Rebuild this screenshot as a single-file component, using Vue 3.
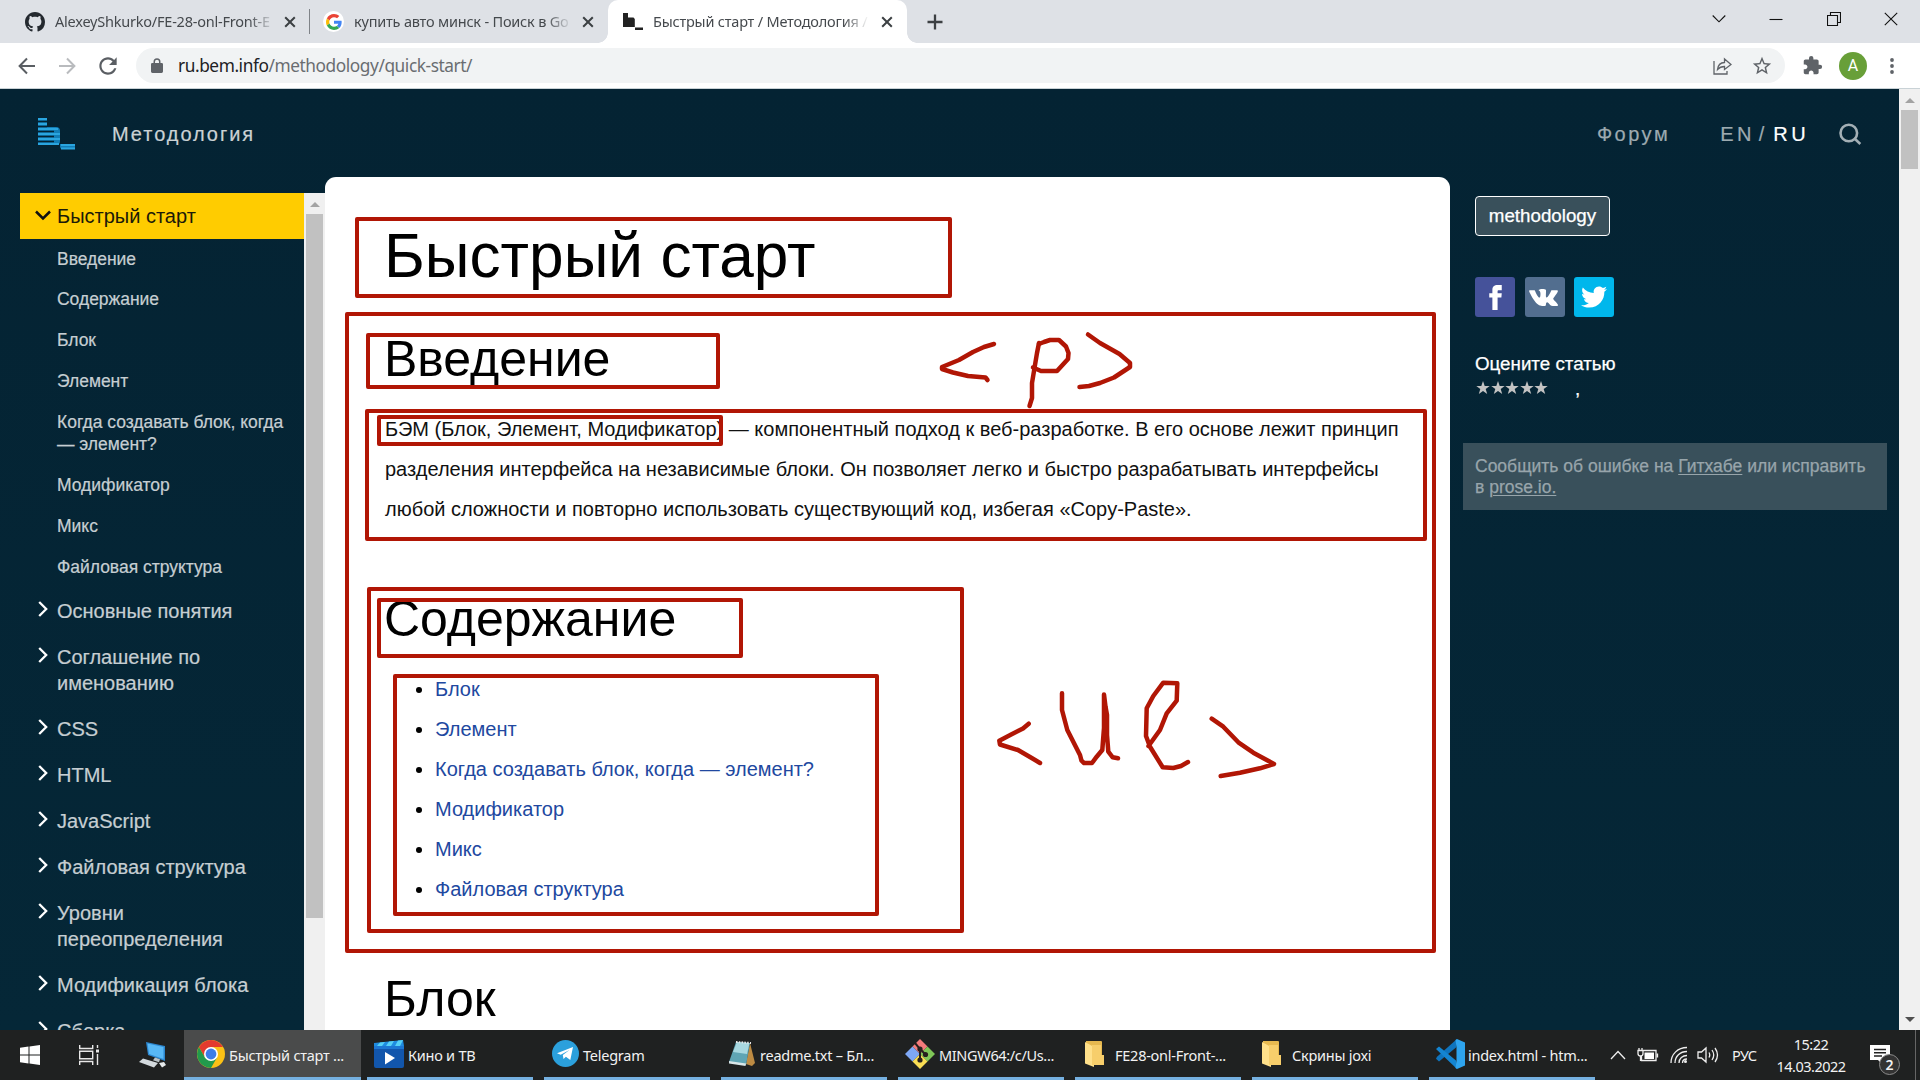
<script setup>
const sections = ['Введение', 'Содержание', 'Блок', 'Элемент', 'Когда создавать блок, когда — элемент?', 'Модификатор', 'Микс', 'Файловая структура']
const topics = ['Основные понятия', 'Соглашение по именованию', 'CSS', 'HTML', 'JavaScript', 'Файловая структура', 'Уровни переопределения', 'Модификация блока', 'Сборка']
const contents = ['Блок', 'Элемент', 'Когда создавать блок, когда — элемент?', 'Модификатор', 'Микс', 'Файловая структура']
const tasks = [
  { id: 'chrome', title: 'Быстрый старт ...' },
  { id: 'movies', title: 'Кино и ТВ' },
  { id: 'telegram', title: 'Telegram' },
  { id: 'notepad', title: 'readme.txt – Бл...' },
  { id: 'git', title: 'MINGW64:/c/Us...' },
  { id: 'folder', title: 'FE28-onl-Front-...' },
  { id: 'folder', title: 'Скрины joxi' },
  { id: 'vscode', title: 'index.html - htm...' },
]
// Frames drawn over the page: x, y, width, height of the stroke centre line
const frames = [
  [357, 219, 593, 77], [347, 314, 1087, 637], [368, 335, 350, 52], [367, 411, 1058, 128],
  [379, 417, 342, 27], [369, 589, 593, 342], [379, 600, 362, 56], [395, 676, 482, 238],
]
const strokes = [
  '994,344 984,347 973,352 959,360 942,367 942,369 953,372.5 968,376 985.5,377.5 987.5,380',
  '1039,343 1037,353 1035,365 1032,383 1032,398 1029.5,406',
  '1039,344 1044,342 1050,340 1059,340 1066,346.5 1068.5,353 1068,359 1057,371 1041,371 1033,367.5',
  '1088,334.5 1100,343 1119.5,354 1130,363 1130,367 1114,377.5 1100,383 1089,386 1079.5,387',
  '1028.7,723.7 1023,728.5 1010.7,734.7 999.3,740.7 1000,744.5 1018,750 1031.7,758 1040,763',
  '1062,693.3 1062,710 1067.3,730 1080,755 1081.5,760.7 1084,763 1092,763 1096.7,756.7 1102.3,750 1104,728 1104,694.5 1105.5,706.7 1107,715 1107,735 1108.3,751.7 1112.7,757.3 1118,758.3',
  '1148.5,746 1160,730 1166.7,713.3 1176.7,700.7 1177.3,683.3 1163.3,682.7 1153.3,696 1146.7,708.3 1146,736 1150,746.7 1162.7,767.3 1173.3,768 1181,766 1188,762',
  '1211.7,718.7 1223.3,726.7 1238.3,742.3 1253.3,752.7 1274,764 1260,768.3 1240,772.7 1220.7,776',
]
const star = 'M7 0l1.7 4.9h5l-4 3.1 1.5 5L7 10l-4.2 3 1.5-5-4-3.1h5z'
</script>

<template>
  <div class="screen">
    <div class="tabs">
      <div class="tab tab-first">
        <svg class="fav" width="20" height="20" viewBox="0 0 16 16"><path fill="#24292f" d="M8 0C3.58 0 0 3.58 0 8c0 3.54 2.29 6.53 5.47 7.59.4.07.55-.17.55-.38 0-.19-.01-.82-.01-1.49-2.01.37-2.53-.49-2.69-.94-.09-.23-.48-.94-.82-1.13-.28-.15-.68-.52-.01-.53.63-.01 1.08.58 1.23.82.72 1.21 1.87.87 2.33.66.07-.52.28-.87.51-1.07-1.78-.2-3.64-.89-3.64-3.95 0-.87.31-1.59.82-2.15-.08-.2-.36-1.02.08-2.12 0 0 .67-.21 2.2.82.64-.18 1.32-.27 2-.27s1.36.09 2 .27c1.53-1.04 2.2-.82 2.2-.82.44 1.1.16 1.92.08 2.12.51.56.82 1.27.82 2.15 0 3.07-1.87 3.75-3.65 3.95.29.25.54.73.54 1.48 0 1.07-.01 1.93-.01 2.2 0 .21.15.46.55.38A8.01 8.01 0 0 0 16 8c0-4.42-3.58-8-8-8z"/></svg>
        <span class="tab-title t1">AlexeyShkurko/FE-28-onl-Front-E</span>
        <svg class="x" width="12" height="12" viewBox="0 0 12 12"><path d="M1.2 1.2l9.6 9.6M10.8 1.2l-9.6 9.6"/></svg>
      </div>
      <i class="sep"></i>
      <div class="tab tab-second">
        <span class="gwrap"><svg width="16" height="16" viewBox="0 0 48 48"><path fill="#EA4335" d="M24 9.5c3.54 0 6.71 1.22 9.21 3.6l6.85-6.85C35.9 2.38 30.47 0 24 0 14.62 0 6.51 5.38 2.56 13.22l7.98 6.19C12.43 13.72 17.74 9.5 24 9.5z"/><path fill="#4285F4" d="M46.98 24.55c0-1.57-.15-3.09-.38-4.55H24v9.02h12.94c-.58 2.96-2.26 5.48-4.78 7.18l7.73 6c4.51-4.18 7.09-10.36 7.09-17.65z"/><path fill="#FBBC05" d="M10.53 28.59c-.48-1.45-.76-2.99-.76-4.59s.27-3.14.76-4.59l-7.98-6.19C.92 16.46 0 20.12 0 24c0 3.88.92 7.54 2.56 10.78l7.97-6.19z"/><path fill="#34A853" d="M24 48c6.48 0 11.93-2.13 15.89-5.81l-7.73-6c-2.15 1.45-4.92 2.3-8.16 2.3-6.26 0-11.57-4.22-13.47-9.91l-7.98 6.19C6.51 42.62 14.62 48 24 48z"/></svg></span>
        <span class="tab-title t2">купить авто минск - Поиск в Go</span>
        <svg class="x" width="12" height="12" viewBox="0 0 12 12"><path d="M1.2 1.2l9.6 9.6M10.8 1.2l-9.6 9.6"/></svg>
      </div>
      <div class="tab tab-active">
        <svg class="fav" width="20" height="17" viewBox="0 0 20 17"><path fill="#222" d="M0 0h5v4.5h5.5l1.3 1.5v8H0zM12 14.5h8V17h-8z"/></svg>
        <span class="tab-title t3">Быстрый старт / Методология /</span>
        <svg class="x" width="12" height="12" viewBox="0 0 12 12"><path d="M1.2 1.2l9.6 9.6M10.8 1.2l-9.6 9.6"/></svg>
      </div>
      <svg class="plus" width="16" height="16" viewBox="0 0 16 16"><path d="M8 .5v15M.5 8h15" stroke="#3c4043" stroke-width="2.3"/></svg>
      <div class="winctl">
        <svg width="14" height="14" viewBox="0 0 14 14"><path d="M.7 3.5L7 9.8l6.3-6.3"/></svg>
        <svg width="14" height="14" viewBox="0 0 14 14"><path d="M.5 7.5h13"/></svg>
        <svg width="14" height="14" viewBox="0 0 14 14"><path d="M.5 3.500h10v10H.5zM3.500 3.500v-3h10v10h-3"/></svg>
        <svg width="14" height="14" viewBox="0 0 14 14"><path d="M.8.8l12.4 12.4M13.2.8L.8 13.2"/></svg>
      </div>
    </div>

    <div class="toolbar">
      <div class="nav">
        <svg width="18" height="18" viewBox="0 0 18 18"><path d="M17 9H2M9 1.500L1.600 9 9 16.500" fill="none" stroke="#5a5e63" stroke-width="2"/></svg>
        <svg width="18" height="18" viewBox="0 0 18 18"><path d="M1 9h15M9 1.500L16.400 9 9 16.500" fill="none" stroke="#b9bbbe" stroke-width="2"/></svg>
        <svg width="26" height="26" viewBox="0 0 24 24"><path fill="#5a5e63" d="M17.650 6.350C16.200 4.900 14.210 4 12 4c-4.420 0-7.990 3.580-7.990 8s3.570 8 7.990 8c3.730 0 6.840-2.550 7.730-6h-2.080c-.82 2.330-3.040 4-5.650 4-3.310 0-6-2.690-6-6s2.690-6 6-6c1.660 0 3.140.69 4.220 1.780L13 11h7V4z"/></svg>
      </div>
      <div class="omnibox">
        <svg class="lock" width="12" height="15" viewBox="0 0 12 15"><path fill="#5f6368" d="M1.400 5H2.500V3.700a3.500 3.500 0 0 1 7 0V5h1.100A1.300 1.300 0 0 1 12 6.300v7.200a1.400 1.400 0 0 1-1.400 1.400H1.400A1.400 1.400 0 0 1 0 13.500V6.300A1.300 1.300 0 0 1 1.400 5zM4 5h4V3.700a2 2 0 0 0-4 0z"/></svg>
        <span class="url">ru.bem.info<span>/methodology/quick-start/</span></span>
        <svg class="share" width="19" height="18" viewBox="0 0 19 18"><path d="M1 4v13h13v-3M4.500 12.500c.5-4.500 3-6.800 7-7V2l6.500 5.500-6.500 5V9.500c-3 0-5 .8-7 3z" fill="none" stroke="#5f6368" stroke-width="1.300"/></svg>
        <svg class="star" width="22" height="22" viewBox="0 0 24 24"><path fill="#5f6368" d="M22 9.240l-7.190-.62L12 2 9.190 8.630 2 9.240l5.460 4.730L5.820 21 12 17.270 18.180 21l-1.630-7.030L22 9.240zM12 15.400l-3.760 2.270 1-4.280-3.320-2.880 4.380-.38L12 6.100l1.710 4.040 4.380.38-3.320 2.880 1 4.280L12 15.400z"/></svg>
      </div>
      <svg class="puzzle" width="21" height="21" viewBox="0 0 24 24"><path fill="#5f6368" d="M20.500 11H19V7c0-1.100-.9-2-2-2h-4V3.500a2.500 2.500 0 0 0-5 0V5H4c-1.100 0-2 .9-2 2v3.800h1.500c1.490 0 2.700 1.210 2.700 2.700s-1.210 2.700-2.700 2.700H2V20c0 1.100.9 2 2 2h3.800v-1.500c0-1.490 1.210-2.700 2.700-2.700s2.700 1.210 2.700 2.700V22H17c1.100 0 2-.9 2-2v-4h1.500a2.500 2.500 0 0 0 0-5z"/></svg>
      <span class="avatar">A</span>
      <svg class="dots" width="4" height="16" viewBox="0 0 4 16"><g fill="#5f6368"><circle cx="2" cy="2" r="1.900"/><circle cx="2" cy="8" r="1.900"/><circle cx="2" cy="14" r="1.900"/></g></svg>
    </div>

    <div class="view">
      <div class="site">
        <header class="head">
          <svg class="logo" width="38" height="32" viewBox="0 0 38 32">
            <path fill="#127db6" d="M0 0h9v9h9q4 0 4 4v10q0 4-4 4H0zM22 26h15v5H24q-2 0-2-3z"/>
            <path stroke="#2aa5df" stroke-width="2" d="M0 1h9M0 6h9M0 11h20M0 16h22M0 21h22M0 26h21M23 27h14M23 30.500h14"/>
            <path stroke="#042333" stroke-width="1.500" d="M0 3.500h9M0 8.500h9M0 13.500h16M0 18.500h16M0 23.500h16"/>
          </svg>
          <span class="brand">Методология</span>
          <span class="forum">Форум</span>
          <span class="lang">EN</span><span class="slash">/</span><span class="lang on">RU</span>
          <svg class="search" width="23" height="23" viewBox="0 0 23 23"><circle cx="9.800" cy="10" r="8.300"/><path d="M15.500 15.500l5.800 5.500"/></svg>
        </header>
        <div class="columns">
          <aside class="side">
            <nav class="menu">
              <div class="topic current">
                <svg width="16" height="11" viewBox="0 0 16 11"><path d="M1 1.500l7 7 7-7"/></svg>
                <span>Быстрый старт</span>
              </div>
              <div v-for="s in sections" :key="s" class="sub">{{ s }}</div>
              <div v-for="t in topics" :key="t" class="topic">
                <svg width="10" height="16" viewBox="0 0 10 16"><path d="M1.200 1l7 7-7 7"/></svg>
                <span>{{ t }}</span>
              </div>
            </nav>
            <div class="sidebar-scroll"><i class="up"></i><i class="thumb"></i></div>
          </aside>
          <main class="card">
            <h1>Быстрый старт</h1>
            <h2 class="intro">Введение</h2>
            <p>БЭМ (Блок, Элемент, Модификатор) — компонентный подход к веб-разработке. В его основе лежит принцип<br>разделения интерфейса на независимые блоки. Он позволяет легко и быстро разрабатывать интерфейсы<br>любой сложности и повторно использовать существующий код, избегая «Copy-Paste».</p>
            <h2>Содержание</h2>
            <ul><li v-for="c in contents" :key="c"><a>{{ c }}</a></li></ul>
            <h2 class="block">Блок</h2>
          </main>
          <aside class="extra">
            <span class="tag">methodology</span>
            <div class="social">
              <span class="fb"><svg width="25" height="25" viewBox="0 0 24 24"><path d="M9 8h-3v4h3v12h5v-12h3.642l.358-4h-4v-1.667c0-.955.192-1.333 1.115-1.333h2.885v-5h-3.808c-3.596 0-5.192 1.583-5.192 4.615v3.385z"/></svg></span>
              <span class="vk"><svg width="29" height="29" viewBox="0 0 24 24"><path d="M13.162 18.994c.609 0 .858-.406.851-.915-.031-1.917.714-2.949 2.059-1.604 1.488 1.488 1.796 2.519 3.603 2.519h3.200c.808 0 1.126-.26 1.126-.668 0-.863-1.421-2.386-2.625-3.504-1.686-1.565-1.765-1.602-.313-3.486 1.801-2.339 4.157-5.336 2.073-5.336h-3.981c-.772 0-.828.435-1.103 1.083-.995 2.347-2.886 5.387-3.604 4.922-.751-.485-.407-2.406-.35-5.261.015-.754.011-1.271-1.141-1.539-.629-.145-1.241-.205-1.809-.205-2.273 0-3.841.953-2.950 1.119 1.571.293 1.420 3.692 1.054 5.160-.638 2.556-3.036-2.024-4.035-4.305-.241-.548-.315-.974-1.175-.974h-3.255c-.492 0-.787.16-.787.516 0 .602 2.960 6.720 5.786 9.770 2.756 2.975 5.480 2.708 7.376 2.708z"/></svg></span>
              <span class="tw"><svg width="26" height="26" viewBox="0 0 24 24"><path d="M24 4.557c-.883.392-1.832.656-2.828.775 1.017-.609 1.798-1.574 2.165-2.724-.951.564-2.005.974-3.127 1.195-.897-.957-2.178-1.555-3.594-1.555-3.179 0-5.515 2.966-4.797 6.045-4.091-.205-7.719-2.165-10.148-5.144-1.290 2.213-.669 5.108 1.523 6.574-.806-.026-1.566-.247-2.229-.616-.054 2.281 1.581 4.415 3.949 4.890-.693.188-1.452.232-2.224.084.626 1.956 2.444 3.379 4.600 3.419-2.070 1.623-4.678 2.348-7.290 2.040 2.179 1.397 4.768 2.212 7.548 2.212 9.142 0 14.307-7.721 13.995-14.646.962-.695 1.797-1.562 2.457-2.549z"/></svg></span>
            </div>
            <div class="rate">Оцените статью</div>
            <div class="stars">
              <svg v-for="n in 5" :key="n" width="14" height="14" viewBox="0 0 14 14"><path :d="star"/></svg>
              <span>,</span>
            </div>
            <div class="report">Сообщить об ошибке на <u>Гитхабе</u> или исправить<br>в <u>prose.io.</u></div>
          </aside>
        </div>
      </div>
      <div class="page-scroll"><i class="up"></i><i class="thumb"></i><i class="down"></i></div>
    </div>

    <div class="taskbar">
      <div class="sys">
        <svg width="20" height="20" viewBox="0 0 20 20"><path fill="#fff" d="M0 2.800l8.500-1.200v8H0zM9.500 1.500L20 0v9.600H9.500zM0 10.500h8.500v8L0 17.300zM9.500 10.500H20V20L9.500 18.600z"/></svg>
        <svg width="21" height="20" viewBox="0 0 21 20"><path fill="none" stroke="#e8e8e8" stroke-width="1.400" d="M.7 0v3.500h13V0M.7 20v-3.500h13V20M.7 6.200h13v7.500H.7zM18.500 0v3M18.500 9v11"/><path fill="#e8e8e8" d="M17 4.500h3v3h-3z"/></svg>
        <svg width="28" height="26" viewBox="0 0 28 26"><path fill="#2b86cf" d="M7 0l19 4v15L9 13z"/><path fill="#58b8f6" d="M8.500 1.500L24.500 5v12L10 12z"/><path fill="#b9c2c8" d="M16 15.500l5 1.700-1 3-6-2z"/><path fill="#d4dade" d="M4 16.500l15 4.500-4 4.500L0 20z"/><path fill="#e6eaec" d="M20 21l5-1 2 3-4 2.500z"/></svg>
      </div>
      <div v-for="(t, i) in tasks" :key="i" class="task" :class="[t.id, { active: i === 0 }]">
        <svg v-if="t.id === 'chrome'" class="ti" width="28" height="28" viewBox="0 0 28 28"><circle cx="14" cy="14" r="14" fill="#fbc116"/><path fill="#e33b2e" d="M1.900 7A14 14 0 0 1 26.100 7H14L8 17.500z"/><path fill="#229a4c" d="M1.900 7A14 14 0 0 0 14 28l6-10.500H8z"/><circle cx="14" cy="14" r="7" fill="#fff"/><circle cx="14" cy="14" r="5.400" fill="#3d7de8"/></svg>
        <svg v-else-if="t.id === 'movies'" class="ti" width="30" height="28" viewBox="0 0 30 28"><path fill="#1256ac" d="M0 8h30v18a2 2 0 0 1-2 2H2a2 2 0 0 1-2-2z"/><path fill="#1f8be0" d="M0 3l29-3 1 6H0z"/><path fill="#55d0f5" d="M6 2.400L11 2 8 6H3zM15 1.500l5-.5-3 5h-5zM24 .6l5-.6-3 6h-5z"/><path fill="#1d77d3" d="M0 6h30v3H0z"/><path fill="#fff" d="M11 12l10 6-10 6.500z"/></svg>
        <svg v-else-if="t.id === 'telegram'" class="ti" width="27" height="27" viewBox="0 0 27 27"><circle cx="13.500" cy="13.500" r="13.500" fill="#2ba0dc"/><path fill="#fff" d="M5 13.200L21 7l-2.700 13-4.400-3.200-2.400 2.300-.7-4.200L17.500 10l-8.800 4.800z"/></svg>
        <svg v-else-if="t.id === 'notepad'" class="ti" width="28" height="27" viewBox="0 0 28 27"><path fill="#bd8b43" d="M22 3l5 20-3 3-6-2z"/><path fill="#5fa5b4" d="M8 2l14 1-4 22L1 22z"/><path fill="#a8d8e0" d="M9 2l12.500 1-2.500 11L5 12z"/><path fill="#d9e6e8" d="M1 21l17 2.500-.5 2.500L1 23.500z"/><path stroke="#e8e8e8" stroke-width="2" stroke-dasharray="1.500 1.300" d="M8 2l15 1"/></svg>
        <svg v-else-if="t.id === 'git'" class="ti" width="30" height="30" viewBox="0 0 30 30"><path fill="#f37b7b" d="M15 0l7.500 7.500L15 15 7.500 7.500z"/><path fill="#7fc758" d="M22.500 7.500L30 15l-7.500 7.500L15 15z"/><path fill="#7ea8f5" d="M7.500 7.500L15 15l-7.500 7.500L0 15z"/><path fill="#fade54" d="M15 15l7.500 7.500L15 30l-7.500-7.500z"/><path fill="none" stroke="#26201e" stroke-width="2" d="M10 4l5 6v12M15 10l6 6"/><g fill="#26201e"><circle cx="15" cy="10" r="2.600"/><circle cx="15" cy="21" r="2.600"/><circle cx="20.500" cy="15.500" r="2.600"/></g></svg>
        <svg v-else-if="t.id === 'folder'" class="ti" width="19" height="26" viewBox="0 0 19 26"><path fill="#e7b950" d="M1 0h15a1 1 0 0 1 1 1v22H1z"/><path fill="#ffe08a" d="M0 1l9 5v20l-9-3.500z"/><path fill="#f7ce6b" d="M7 4h9v10h3v10H7z"/></svg>
        <svg v-else class="ti" width="30" height="30" viewBox="0 0 30 30"><path fill="#0f74bd" d="M22 0l-1 8.500L4 22.500l-3-2.700 1-2z"/><path fill="#1485d1" d="M1 10l3-2.500 17 14 1 8.500z"/><path fill="#2ea4ee" d="M22 0l8 3.500v23L22 30l-1.500-1 1-7.500v-13L20.500 1z"/></svg>
        <span>{{ t.title }}</span>
      </div>
      <div class="tray">
        <svg class="caret" width="16" height="10" viewBox="0 0 16 10"><path d="M1 9l7-7.500L15 9"/></svg>
        <svg class="batt" width="22" height="16" viewBox="0 0 22 16"><path d="M6.500 3.500h12.500v10H4.500v-5M20.500 6.500v4M1 3.500h5v3a2.500 2.500 0 0 1-5 0zM2 1v2.500M5 1v2.500M3.500 9v5"/><path fill="#fff" stroke="none" d="M7.500 5.500h9.500v6.500H7.500z"/></svg>
        <svg class="wifi" width="18" height="18" viewBox="0 0 18 18"><path d="M1 17C1 8 8 1.500 17 1.500M5 17C5 10.500 10 5.500 17 5.500M9 17c0-4.500 3.500-7.500 8-7.500M12.500 17c0-2.500 2-4 4.500-4"/><circle cx="15.500" cy="15.500" r="1.500" fill="#eee" stroke="none"/></svg>
        <svg class="vol" width="22" height="18" viewBox="0 0 22 18"><path d="M1 6h3.500L9 2v14L4.500 12H1zM12 6.500q1.500 2.500 0 5M15 4q3.500 5 0 10M18 2q5 7 0 14"/></svg>
        <span class="kbd">РУС</span>
        <span class="clock">15:22<br>14.03.2022</span>
        <span class="note">
          <svg width="21" height="20" viewBox="0 0 21 20"><path fill="#fff" d="M0 0h20v15h-7v5l-5-5H0z"/><path stroke="#222" stroke-width="1.500" d="M4 4.500h12M4 7.800h12M4 11h8"/></svg>
          <b>2</b>
        </span>
        <i class="peek"></i>
      </div>
    </div>

    <svg class="marks" width="1920" height="1080" viewBox="0 0 1920 1080">
      <rect v-for="(f, i) in frames" :key="'f' + i" :x="f[0]" :y="f[1]" :width="f[2]" :height="f[3]"/>
      <polyline v-for="(s, i) in strokes" :key="'s' + i" :points="s"/>
    </svg>
  </div>
</template>

<style>
body { margin: 0; overflow: hidden; }
</style>

<style scoped>
.screen { position: relative; width: 1920px; height: 1080px; overflow: hidden; display: flex; flex-direction: column; background: #fff; font-family: "Liberation Sans", Arial, sans-serif; }
svg { display: block; flex: none; }
i { display: block; }

.tabs { height: 43px; flex: none; display: flex; align-items: center; background: #dee1e6; font: 14.5px/20px "Noto Sans", sans-serif; color: #45494d; }
.tab { display: flex; align-items: center; height: 43px; box-sizing: border-box; }
.tab-title { overflow: hidden; white-space: nowrap; margin-left: 10px; padding-bottom: 2px; -webkit-mask-image: linear-gradient(90deg, #000 88%, transparent); mask-image: linear-gradient(90deg, #000 88%, transparent); }
.x { fill: none; stroke: #3c4043; stroke-width: 2; }
.tab-first { padding-left: 25px; width: 309px; }
.t1 { width: 220px; letter-spacing: -0.22px; margin-right: 9px; }
.sep { width: 1px; height: 25px; background: #7f8388; }
.tab-second { width: 298px; padding-left: 13px; }
.gwrap { width: 21px; height: 21px; border-radius: 50%; background: #fff; display: flex; align-items: center; justify-content: center; }
.t2 { width: 218px; letter-spacing: -0.2px; margin-right: 10px; }
.tab-active { position: relative; width: 299px; padding-left: 15px; background: #fff; border-radius: 10px 10px 0 0; }
.tab-active::before, .tab-active::after { content: ""; position: absolute; bottom: 0; width: 10px; height: 10px; }
.tab-active::before { left: -10px; background: radial-gradient(circle at 0 0, transparent 9.5px, #fff 10px); }
.tab-active::after { right: -10px; background: radial-gradient(circle at 100% 0, transparent 9.5px, #fff 10px); }
.t3 { width: 216px; letter-spacing: -0.2px; margin-right: 12px; }
.plus { margin-left: 20px; }
.winctl { margin-left: auto; display: flex; gap: 43.3px; padding: 0 22px 6px 0; }
.winctl svg { fill: none; stroke: #111; stroke-width: 1.1; }

.toolbar { height: 46px; box-sizing: border-box; border-bottom: 1px solid #c9d2d6; flex: none; display: flex; align-items: center; background: #fff; }
.nav { display: flex; align-items: center; width: 136px; box-sizing: border-box; padding-left: 18px; gap: 22px; }
.nav svg:last-child { margin-left: -3px; }
.omnibox { width: 1649px; height: 35px; border-radius: 18px; background: #f1f3f4; display: flex; align-items: center; box-sizing: border-box; padding: 0 12px 0 15px; }
.url { margin-left: 15px; font: 17.3px/24px "Noto Sans", sans-serif; letter-spacing: -0.43px; color: #202124; flex: 1; }
.url span { color: #696d71; }
.star { margin-left: 19px; }
.puzzle { margin-left: 17px; }
.avatar { width: 28px; height: 28px; border-radius: 50%; background: #689f38; color: #fff; font: 16px/28px Roboto, sans-serif; text-align: center; margin-left: 16px; }
.dots { margin-left: 23px; }

.view { height: 941px; flex: none; display: flex; overflow: hidden; }
.site { width: 1899px; background: linear-gradient(#042333, #052737); display: flex; flex-direction: column; overflow: hidden; }
.head { height: 88px; flex: none; display: flex; align-items: center; box-sizing: border-box; padding: 2px 37px 0 38px; font-size: 20px; color: #9daab0; -webkit-text-stroke: 0.2px; }
.brand { color: #cbd2d5; letter-spacing: 1.95px; margin: 0 auto 0 36px; }
.forum { letter-spacing: 2.5px; margin-right: 50px; }
.lang { letter-spacing: 3.4px; }
.slash { margin: 0 9px 0 4px; }
.lang.on { color: #fff; }
.search { fill: none; stroke: #a3afb5; stroke-width: 2.6; margin-left: 30px; }
.columns { display: flex; height: 853px; }

.side { display: flex; margin: 16px 0 0 20px; width: 305px; overflow: hidden; flex: none; }
.menu { width: 284px; color: #c6ced2; -webkit-text-stroke: 0.2px; }
.topic { display: flex; padding: 10px 50px 10px 18px; font-size: 20px; line-height: 26px; }
.topic svg { margin: 3px 9px 0 0; fill: none; stroke: #fff; stroke-width: 2.3; }
.topic.current { background: #fc0; color: #1c1a08; padding-left: 15px; -webkit-text-stroke: 0; }
.current svg { stroke: #111; margin: 7px 6px 0 0; stroke-width: 2.5; }
.sub { padding: 9.5px 8px 9.5px 37px; font-size: 17.5px; line-height: 21.88px; letter-spacing: -0.02px; }
.sidebar-scroll { width: 21px; background: #f0f0f0; }
.up { width: 0; margin: 9px auto 0; border: 5px solid transparent; border-top: 0; border-bottom-color: #a3a3a3; }
.thumb { width: 17px; background: #c1c1c1; margin: 7px auto 0; }
.sidebar-scroll .thumb { height: 704px; }

.card { width: 1125px; flex: none; box-sizing: border-box; background: #fff; border-radius: 11px 11px 0 0; padding: 40.5px 0 0 60px; overflow: hidden; }
h1, h2, p, ul { margin: 0; font-weight: 400; color: #000; }
h1 { font-size: 62.2px; line-height: 75px; margin-left: -1px; }
h2 { font-size: 50px; line-height: 60px; margin: 60.3px 0 0 -1px; }
.intro { margin-top: 36px; }
p { font-size: 20px; line-height: 40px; margin-top: 20.5px; white-space: nowrap; color: #111; }
ul { margin-top: 19.5px; padding-left: 50px; font-size: 20px; line-height: 40px; }
a { color: #2148a0; }

.extra { padding: 19px 12px 0 13px; width: 449px; box-sizing: border-box; color: #fff; -webkit-text-stroke: 0.25px; }
.tag { display: block; width: 133px; height: 38px; margin-left: 12px; border: 1px solid #fff; border-radius: 4px; background: #39505b; font-size: 18.75px; line-height: 37px; text-align: center; }
.social { display: flex; gap: 9.5px; margin: 41px 0 0 12px; }
.social span { width: 40px; height: 40px; border-radius: 3px; display: flex; align-items: center; justify-content: center; }
.social svg { fill: #fff; }
.fb { background: #45529a; }
.vk { background: #526e8f; }
.vk svg { margin-right: 2px; }
.tw { background: #00b7ec; }
.rate { margin: 35px 0 0 12px; font-size: 18.75px; line-height: 24px; }
.stars { display: flex; margin: 5px 0 0 13px; height: 14px; gap: .6px; }
.stars svg { fill: #c3c3c3; }
.stars span { margin-left: 26px; font-size: 18.75px; line-height: 15px; }
.report { margin-top: 48px; height: 67px; box-sizing: border-box; padding: 12.5px 12px; background: #39505b; color: #98a5ab; font-size: 17.5px; line-height: 21.5px; white-space: nowrap; }
.report u { text-underline-offset: 2px; text-decoration-thickness: 1px; }
.page-scroll { width: 21px; background: #f0f0f0; display: flex; flex-direction: column; }
.page-scroll .thumb { height: 59px; }
.down { width: 0; margin: auto auto 8px; border: 5px solid transparent; border-bottom: 0; border-top-color: #505050; }

.taskbar { height: 50px; display: flex; background: #1f2121; color: #f2f2f2; font: 14.5px/20px "Noto Sans", sans-serif; }
.sys { width: 184px; box-sizing: border-box; padding-left: 20px; display: flex; align-items: center; gap: 39px; }
.task { width: 166px; height: 50px; box-sizing: border-box; margin: 0 0 0 11px; display: flex; align-items: center; border-bottom: 3px solid #75b0e0; white-space: nowrap; letter-spacing: -0.25px; padding-left: 7px; }
.task span { margin: 2px 0 0 4px; }
.task.active { width: 177px; margin: 0 -5px 0 0; padding-left: 13px; background: #4a4b4b; }
.folder .ti { margin: 0 7px 0 3px; }
.telegram { padding-left: 8px; }
.git { letter-spacing: -0.35px; }
.vscode .ti { margin: 0 -1px 0 -1px; }
.tray { display: flex; align-items: center; flex: 1; height: 50px; }
.tray svg { fill: none; stroke: #eee; stroke-width: 1.3; }
.tray .caret { margin-left: 15px; }
.batt { margin-left: 11px; }
.wifi { margin-left: 11px; }
.vol { margin-left: 9px; }
.kbd { margin-left: 13px; width: 28px; letter-spacing: -0.5px; }
.clock { width: 80px; margin-left: 11px; text-align: center; line-height: 22.5px; letter-spacing: -0.5px; }
.note { position: relative; margin-left: 19px; }
.note svg { stroke: none; }
.note b { position: absolute; left: 9px; top: 9px; width: 21px; height: 21px; border-radius: 50%; box-sizing: border-box; border: 1px solid #8b8b8b; background: #333; font: 600 14px/19px "Noto Sans", sans-serif; text-align: center; }
.peek { width: 1px; height: 50px; background: #666; margin: 0 4px 0 auto; }

.marks { position: absolute; left: 0; top: 0; fill: none; stroke: #b11605; stroke-width: 4; stroke-linejoin: round; stroke-linecap: round; }
.marks polyline { stroke-width: 4.5; }
</style>
